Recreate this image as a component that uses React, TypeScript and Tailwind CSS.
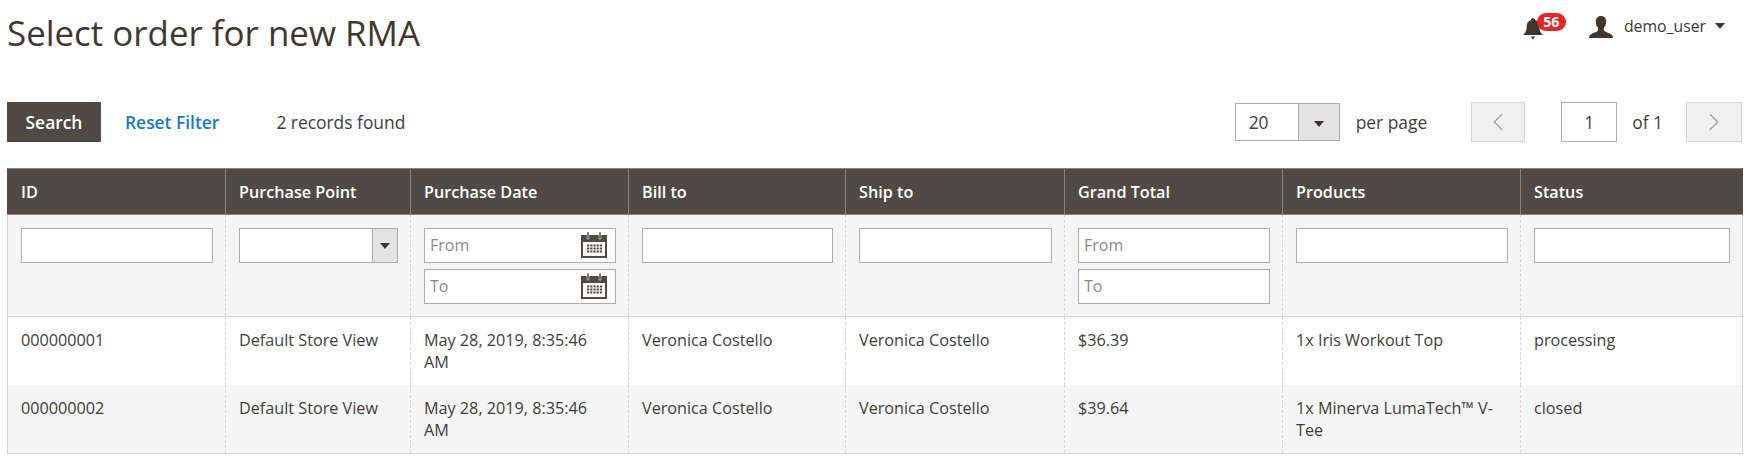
import { ChevronLeft, ChevronRight } from 'lucide-react'

const COLUMNS = [
  { label: 'ID', width: 'w-[218px]' },
  { label: 'Purchase Point', width: 'w-[185px]' },
  { label: 'Purchase Date', width: 'w-[218px]' },
  { label: 'Bill to', width: 'w-[217px]' },
  { label: 'Ship to', width: 'w-[219px]' },
  { label: 'Grand Total', width: 'w-[218px]' },
  { label: 'Products', width: 'w-[238px]' },
  { label: 'Status', width: 'w-[222px]' },
]

const ROWS = [
  ['000000001', 'Default Store View', 'May 28, 2019, 8:35:46 AM', 'Veronica Costello', 'Veronica Costello', '$36.39', '1x Iris Workout Top', 'processing'],
  ['000000002', 'Default Store View', 'May 28, 2019, 8:35:46 AM', 'Veronica Costello', 'Veronica Costello', '$39.64', '1x Minerva LumaTech™ V-Tee', 'closed'],
]

function Caret() {
  return <span className="block w-0 h-0 border-x-[5px] border-x-transparent border-t-[6px] border-t-[#41362f]" />
}

function CalendarIcon() {
  return (
    <svg width="26" height="26" viewBox="0 0 26 26" className="absolute right-[9px] top-[4px]">
      <rect x="0" y="3" width="26" height="23" fill="#514943" />
      <rect x="2" y="10" width="22" height="14" fill="#fff" />
      <rect x="6" y="0" width="2" height="7" fill="#514943" stroke="#fff" strokeWidth="0.5" />
      <rect x="18" y="0" width="2" height="7" fill="#514943" stroke="#fff" strokeWidth="0.5" />
      <g fill="#514943">
        {[0, 1, 2].map(r =>
          [0, 1, 2, 3, 4].map(c => (
            <rect key={`${r}-${c}`} x={6 + c * 3.2} y={12.5 + r * 3} width="2.2" height="2" />
          ))
        )}
      </g>
    </svg>
  )
}

function TextFilter({ placeholder, calendar }: { placeholder?: string; calendar?: boolean }) {
  return (
    <div className="relative">
      <input
        placeholder={placeholder}
        className="block w-full h-[35px] bg-white border border-[#adadad] pl-[5px] pr-[5px] pb-[2px] text-[16px] text-[#303030] placeholder:text-[#8a8a8a] outline-none"
      />
      {calendar && <CalendarIcon />}
    </div>
  )
}

function FilterCell({ children, last }: { children: React.ReactNode; last?: boolean }) {
  return (
    <td className={`align-top pt-[13px] pb-[12px] pl-[13px] pr-[12px] border-x border-y border-[#d6d6d6] border-dashed [border-block-style:solid] first:[border-left-style:solid] ${last ? '[border-right-style:solid]' : ''}`}>
      {children}
    </td>
  )
}

export default function App() {
  return (
    <div className="min-h-screen bg-white pl-[7px] pr-[8px] text-[16px] text-[#3d3d3d] font-['Open_Sans',sans-serif]">
      {/* Page title + user */}
      <div className="h-[102px] flex justify-between items-start">
        <h1 className="mt-[11px] text-[34.900px] leading-[44px] font-normal text-[#41362f]">Select order for new RMA</h1>
        <div className="flex items-center mt-[13px] pr-[17px]">
          <div className="relative w-[44px] h-[26px]">
            <svg width="20" height="22" viewBox="0 0 20 22" className="absolute left-0 top-[5px]" fill="#41362f">
              <path d="M10 0c1.200 0 2 .8 2 1.900C15 2.800 16.300 5.200 16.300 8.500c0 4 1.100 6.200 3.700 8.500H0c2.600-2.300 3.700-4.500 3.700-8.500C3.700 5.200 5 2.800 8 1.900 8 .8 8.800 0 10 0z" />
              <path d="M7.600 18.500h4.800L10 21.500z" />
            </svg>
            <span className="absolute left-[14px] top-0 w-[29px] h-[18px] rounded-full bg-[#e22626] text-white text-[14px] leading-[18px] font-bold text-center">56</span>
          </div>
          <svg width="24" height="22" viewBox="0 0 24 22" className="ml-[22px] mt-[2px]" fill="#41362f">
            <path d="M12 0c3.400 0 5.200 2.400 5.200 5.600 0 2.600-1 5-2.400 6.400v2c0 1.200 2.200 1.900 4.600 2.900 2.400 1 4.600 1.900 4.600 5.100H0c0-3.200 2.200-4.100 4.600-5.100 2.400-1 4.600-1.700 4.600-2.900v-2C7.800 10.600 6.800 8.200 6.800 5.600 6.800 2.400 8.600 0 12 0z" />
          </svg>
          <span className="ml-[11px] mt-[1px] text-[15.800px] text-[#41362f]">demo_user</span>
          <span className="ml-[9px]"><Caret /></span>
        </div>
      </div>

      {/* Toolbar */}
      <div className="h-[40px] flex justify-between items-center text-[17.400px]">
        <div className="flex items-center">
          <button className="w-[94px] h-[40px] bg-[#514943] text-white font-semibold">Search</button>
          <a className="ml-[24px] text-[#1979c3] font-semibold">Reset Filter</a>
          <span className="ml-[57px]">2 records found</span>
        </div>
        <div className="flex items-center">
          <div className="flex w-[105px] h-[38px] border border-[#adadad] bg-white">
            <span className="flex-1 pl-[13px] leading-[36px]">20</span>
            <span className="w-[41px] pt-[4px] flex items-center justify-center bg-[#e3e3e3] border-l border-l-[#adadad]"><Caret /></span>
          </div>
          <span className="ml-[16px]">per page</span>
          <button className="ml-[44px] w-[54px] h-[40px] flex items-center justify-center bg-[#f0f0f0] border border-[#d6d6d6] text-[#a3a3a3]">
            <ChevronLeft size={30} strokeWidth={1.1} />
          </button>
          <div className="ml-[36px] w-[56px] h-[40px] border border-[#adadad] bg-white flex items-center justify-center">1</div>
          <span className="ml-[15px]">of 1</span>
          <button className="ml-[23px] w-[56px] h-[40px] flex items-center justify-center bg-[#f0f0f0] border border-[#d6d6d6] text-[#a3a3a3]">
            <ChevronRight size={30} strokeWidth={1.1} />
          </button>
        </div>
      </div>

      {/* Grid */}
      <table className="mt-[26px] w-full table-fixed border-collapse text-[16.200px]">
        <thead>
          <tr className="bg-[#514943] text-white">
            {COLUMNS.map(col => (
              <th key={col.label} className={`${col.width} h-[46px] pt-[1px] pl-[13px] pr-[14px] text-left font-semibold border border-[#8a837f] first:border-l-[#514943] last:border-r-[#514943]`}>
                {col.label}
              </th>
            ))}
          </tr>
        </thead>
        <tbody>
          <tr className="bg-[#f5f5f5] h-[102px]">
            <FilterCell><TextFilter /></FilterCell>
            <FilterCell>
              <div className="flex h-[35px] border border-[#adadad] bg-white">
                <span className="flex-1" />
                <span className="w-[25px] flex items-center justify-center bg-[#e3e3e3] border-l border-l-[#adadad]"><Caret /></span>
              </div>
            </FilterCell>
            <FilterCell>
              <div className="flex flex-col gap-[6px]">
                <TextFilter placeholder="From" calendar />
                <TextFilter placeholder="To" calendar />
              </div>
            </FilterCell>
            <FilterCell><TextFilter /></FilterCell>
            <FilterCell><TextFilter /></FilterCell>
            <FilterCell>
              <div className="flex flex-col gap-[6px]">
                <TextFilter placeholder="From" />
                <TextFilter placeholder="To" />
              </div>
            </FilterCell>
            <FilterCell><TextFilter /></FilterCell>
            <FilterCell last><TextFilter /></FilterCell>
          </tr>
          {ROWS.map((row, idx) => (
            <tr key={row[0]} className={idx % 2 ? 'bg-[#f5f5f5] h-[69px]' : 'bg-white h-[68px]'}>
              {row.map((cell, i) => (
                <td
                  key={i}
                  className={`align-top pt-[12px] pb-[11px] pl-[13px] pr-[14px] leading-[22px] border-x border-b border-[#d6d6d6] border-dashed first:[border-left-style:solid] last:[border-right-style:solid] ${idx === 1 ? '[border-bottom-style:solid]' : 'border-b-transparent'}`}
                >
                  {cell}
                </td>
              ))}
            </tr>
          ))}
        </tbody>
      </table>
    </div>
  )
}
